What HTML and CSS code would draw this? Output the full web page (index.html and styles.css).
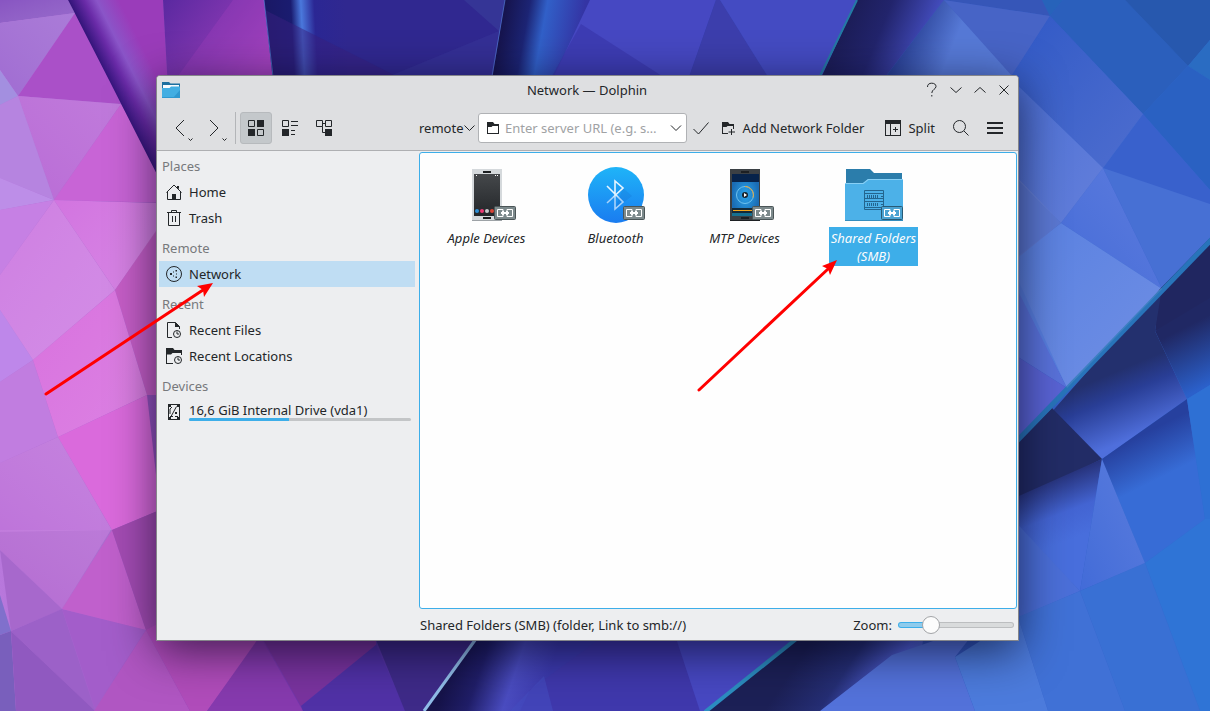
FILE: index.html
```html
<!DOCTYPE html>
<html lang="en">
<head>
<meta charset="utf-8">
<title>Network — Dolphin</title>
<link rel="stylesheet" href="styles.css">
</head>
<body>
<div class="desktop">
<svg class="wallpaper" viewBox="0 0 1210 711" preserveAspectRatio="xMidYMid slice" aria-hidden="true">
<defs>
<linearGradient id="base"><stop offset="0" stop-color="#b878dc"/><stop offset=".22" stop-color="#7c38ac"/><stop offset=".4" stop-color="#3430a0"/><stop offset="1" stop-color="#326cd0"/></linearGradient>
<linearGradient id="lite" x1="0" y1="0" x2="1" y2="1"><stop offset="0" stop-color="#fff" stop-opacity="0"/><stop offset="1" stop-color="#e8d8ff" stop-opacity=".16"/></linearGradient>
<linearGradient id="liteUp" x1="0" y1="1" x2="1" y2="0"><stop offset="0" stop-color="#fff" stop-opacity="0"/><stop offset="1" stop-color="#e8d8ff" stop-opacity=".14"/></linearGradient>
<linearGradient id="fold" gradientUnits="userSpaceOnUse" x1="88" y1="38" x2="128" y2="18"><stop offset="0" stop-color="#35157c"/><stop offset=".3" stop-color="#6a2ba8"/><stop offset=".55" stop-color="#8a55c8"/><stop offset="1" stop-color="#9a3cba"/></linearGradient>
<linearGradient id="mag" x1="0" y1="0" x2="1" y2=".6"><stop offset="0" stop-color="#5a28a0"/><stop offset="1" stop-color="#a042bc"/></linearGradient>
<linearGradient id="b1" gradientUnits="userSpaceOnUse" x1="267" y1="0" x2="345" y2="-4"><stop offset="0" stop-color="#1a1866"/><stop offset=".3" stop-color="#1a1c70"/><stop offset=".43" stop-color="#4a78dc"/><stop offset=".6" stop-color="#2b2794"/><stop offset="1" stop-color="#302890"/></linearGradient>
<linearGradient id="b2" gradientUnits="userSpaceOnUse" x1="503" y1="20" x2="580" y2="34"><stop offset="0" stop-color="#16144e"/><stop offset=".3" stop-color="#1c2474"/><stop offset=".52" stop-color="#3160c8"/><stop offset="1" stop-color="#3434a4"/></linearGradient>
<linearGradient id="b3" gradientUnits="userSpaceOnUse" x1="840" y1="40" x2="918" y2="72"><stop offset="0" stop-color="#1c1d58"/><stop offset=".4" stop-color="#22246c"/><stop offset="1" stop-color="#4650c4"/></linearGradient>
<linearGradient id="b4" gradientUnits="userSpaceOnUse" x1="900" y1="48" x2="945" y2="66"><stop offset="0" stop-color="#294094"/><stop offset="1" stop-color="#5679d6"/></linearGradient>
<linearGradient id="r1" gradientUnits="userSpaceOnUse" x1="1120" y1="370" x2="1146" y2="432"><stop offset="0" stop-color="#23306e"/><stop offset=".35" stop-color="#293e96"/><stop offset="1" stop-color="#4f6fdc"/></linearGradient>
<linearGradient id="r2" gradientUnits="userSpaceOnUse" x1="1180" y1="330" x2="1208" y2="385"><stop offset="0" stop-color="#202864"/><stop offset="1" stop-color="#2b60ca"/></linearGradient>
<linearGradient id="r3" gradientUnits="userSpaceOnUse" x1="1135" y1="438" x2="1156" y2="480"><stop offset="0" stop-color="#26409e"/><stop offset="1" stop-color="#376cd6"/></linearGradient>
<linearGradient id="r4" gradientUnits="userSpaceOnUse" x1="1045" y1="475" x2="1070" y2="540"><stop offset="0" stop-color="#222a6c"/><stop offset=".6" stop-color="#4364d2"/><stop offset="1" stop-color="#486edc"/></linearGradient>
<linearGradient id="w1" gradientUnits="userSpaceOnUse" x1="450" y1="670" x2="540" y2="700"><stop offset="0" stop-color="#16134a"/><stop offset=".3" stop-color="#201e68"/><stop offset=".66" stop-color="#4a4cc0"/><stop offset="1" stop-color="#3c3aae"/></linearGradient>
<linearGradient id="w2" gradientUnits="userSpaceOnUse" x1="805" y1="650" x2="888" y2="705"><stop offset="0" stop-color="#1c2056"/><stop offset=".45" stop-color="#252e74"/><stop offset=".85" stop-color="#5060d6"/><stop offset="1" stop-color="#4e68d0"/></linearGradient>
</defs>
<rect width="1210" height="711" fill="url(#base)"/>
<g>
<path fill="#8855c2" d="M0 0H68L75 13 0 23z"/><path fill="#a06cd2" d="M0 23 75 13 18 96 0 70z"/><path fill="#a38fe0" d="M0 70 18 96 0 105z"/>
<path fill="#aa50c8" d="M75 13 18 96 121 104 109 76z"/><path fill="#b96bd6" d="M18 96 121 104 54 200z"/><path fill="#b684e0" d="M18 96 0 105V178L54 200z"/>
<path fill="#bd8ee8" d="M0 178 54 200 0 210z"/><path fill="#c864d6" d="M121 104 170 190V203L54 200z"/><path fill="#c680e4" d="M54 200 0 210V275z"/>
<path fill="#ce7ee2" d="M54 200 0 275V310L33 360 115 290z"/><path fill="#d274e0" d="M54 200 157 203 160 226 115 290z"/><path fill="#c65ec8" d="M160 225 115 290 147 395H165z"/>
<path fill="#be87ea" d="M0 310 33 360 0 382z"/><path fill="#c17de0" d="M33 360 0 382V463L58 437z"/><path fill="#d870de" d="M33 360 115 290 147 395 58 437z"/>
<path fill="#b46bd2" d="M0 528H112L62 609 0 550z"/><path fill="#be74da" d="M58 437 0 463V532L112 530z"/><path fill="#da6adc" d="M58 437 147 395 160 510 112 530z"/>
<path fill="#a768cc" d="M0 550 62 609 11 631z"/><path fill="#8070cc" d="M0 595 11 631 0 635z"/><path fill="#795fbc" d="M0 635 11 631 16 711H0z"/>
<path fill="#9c61c8" d="M11 631 62 609 95 711z"/><path fill="#9059c0" d="M11 631 95 711H16z"/><path fill="#a35dca" d="M62 609 146 630 95 708z"/>
<path fill="#c060cc" d="M112 530 146 630 62 609z"/><path fill="#a44cb4" d="M112 530 160 510V625L146 630z"/><path fill="#b056c2" d="M146 630 190 711H94z"/>
<path fill="#b04cba" d="M146 630 165 620 270 625 207 711H190z"/><path fill="#863aae" d="M260 636 207 711H303z"/><path fill="#79339e" d="M255 625H376V645L301 706z"/>
<path fill="#5031a6" d="M376 645 301 706 303 711H405z"/><path fill="#3e2a88" d="M370 625H488L424 711H405z"/>
</g>
<g>
<path fill="url(#fold)" d="M68 0H163L168 90H170V200L109 80z"/><path fill="url(#mag)" d="M163 0H264L274 90H168z"/><path fill="#a040bc" opacity=".35" d="M233 0H264L273 76H178z"/>
<path fill="url(#b1)" d="M264 0H505L490 90H274z"/><path fill="#383a98" opacity=".7" d="M464 0H505L499 31z"/><path fill="#3a389c" opacity=".45" d="M499 31 492 76H400L380 80z"/><path fill="#382080" opacity=".5" d="M265 10 396 76H274z"/>
<path fill="url(#b2)" d="M505 0H590L552 80H492z"/><path fill="#4648c2" d="M590 0H716L688 80H552z"/><path fill="#3935aa" opacity=".65" d="M581 24 662 76H552z"/><path fill="#3c3eac" d="M716 0 688 80H770L720 0z"/><path fill="#444bc2" d="M720 0H857L820 80H770z"/>
<path fill="url(#b3)" d="M857 0H944L883 80H820z"/><path fill="url(#b4)" d="M944 0 883 80H1018z"/><path stroke="#237aa4" stroke-width="2" d="M857 0 820 76"/><path stroke="#5a8be0" opacity=".6" d="M505 0 492 76M264 0 273 76" fill="none"/>
<path fill="#3656b8" d="M944 0H1042L1050 16z"/><path fill="#4764c6" d="M944 0 1050 16 1012 76z"/><path fill="#2763ba" d="M1042 0H1063L1050 16z"/>
<path fill="#2b5fbc" d="M1063 0H1125L1188 66 1143 114 1050 16z"/><path fill="#2758ae" d="M1125 0H1210V40L1188 66z"/><path fill="#2a6cc2" d="M1188 66 1210 40V80z"/>
<path fill="#2a61c2" d="M1188 66 1210 80V190L1143 114z"/><path fill="#3058c6" d="M1050 16 1143 114 1103 168 1010 78z"/><path fill="#4a6dd4" d="M1010 78 1103 168 1061 223 1010 172z"/>
<path fill="#3961cc" d="M1143 114 1103 168 1162 289 1210 238V190z"/><path fill="#4770d4" d="M1103 168 1210 204V238L1162 289z"/><path fill="#456bd8" d="M1103 168 1061 223 1162 289z"/>
<path fill="#587fe0" d="M1061 223 1162 289 1067 388 1010 280V262z"/><path fill="#5b78d2" d="M1010 170 1061 223 1010 264z"/><path fill="#5972da" d="M1010 275 1067 388 1010 352z"/><path fill="#5963d4" d="M1010 352 1067 388 1010 450z"/>
<path fill="#202660" d="M1210 238V310L1155 331 1159 290z"/><path fill="url(#r1)" d="M1162 287 1155 331 1187 399 1102 459 1049 415z"/><path fill="url(#r2)" d="M1210 298 1155 331 1187 399 1210 385z"/>
<path fill="#222c66" d="M1052 408 1102 459 1010 505V450z"/><path fill="url(#r4)" d="M1102 459 1010 500V520L1080 591z"/><path fill="#426bd8" d="M1102 459 1080 591 1145 563z"/>
<path fill="url(#r3)" d="M1102 459 1187 399 1205 519 1145 563z"/><path fill="#2e70d4" d="M1187 399 1210 385V519H1205z"/><path fill="#2f74d6" d="M1205 519H1210V711H1200L1145 563z"/>
<path fill="#3970d4" d="M1080 591 1145 563 1200 711H1125z"/><path fill="#4b6fd8" d="M1010 516 1080 591 1010 621z"/><path fill="#4071d6" d="M1018 617 1080 591 1125 711H1048z"/>
<path stroke="#2874ba" stroke-width="5" d="M1213 238 1015 443"/>
<path fill="url(#w1)" d="M484 630H620L610 711H424z"/><path fill="#3f38ac" d="M605 635 530 690 520 711H700V635z"/><path fill="#454cc0" opacity=".6" d="M544 676 553 711H510z"/><path fill="#4748c2" d="M675 635H805L705 711H700z"/>
<path fill="url(#w2)" d="M805 630H925L910 711H705z"/><path fill="#5372da" d="M980 625 892 655 820 711H975L955 657z"/><path fill="#4c7bdc" d="M1018 617 955 657 975 711H1048z"/>
<path stroke="#90bce8" stroke-width="3" d="M478 636 424 711"/><path stroke="#2c8dc0" stroke-width="4" d="M800 636 705 712"/>
</g>
<g fill="url(#lite)"><path d="M54 200 157 203 160 226 115 290z"/><path d="M54 200 0 275V310L33 360 115 290z"/><path d="M33 360 115 290 147 395 58 437z"/><path d="M1050 16 1143 114 1103 168 1010 78z"/><path d="M1010 78 1103 168 1061 223 1010 172z"/><path d="M1061 223 1162 289 1067 388 1010 262z"/><path d="M0 0H68L75 13 0 23z"/></g>
<g fill="url(#liteUp)"><path d="M0 23 75 13 18 96 0 70z"/><path d="M18 96 121 104 54 200z"/><path d="M58 437 0 463V530H112z"/><path d="M0 530H112L62 609 0 550z"/><path d="M1103 168 1061 223 1162 289z"/><path d="M1102 459 1080 591 1145 563z"/></g>
</svg>

<main class="window">
<header class="titlebar">
<svg class="app-icon" viewBox="0 0 18 18" aria-hidden="true"><path fill="#1d6f9f" d="M0 1h7l1.500 1.500H18V8H0z"/><path fill="#f8fbfd" d="M1 4h16v4H1z"/><path fill="#43aee2" d="M0 7h7.500L9 5.500h9V17H0z"/><path fill="#288fc8" d="M0 16h18v1H0zM11 17l7-8v8z" opacity=".7"/></svg>
<h1 class="title">Network — Dolphin</h1>
<div class="window-buttons">
<button type="button" aria-label="Help"><svg class="line" viewBox="0 0 16 16"><path d="M3.500 5c0-2.600 1.600-3.800 4.200-3.800 2.700 0 4.300 1.300 4.300 3.300 0 2.700-4.200 3-4.200 6.500M7.800 13v1.500"/></svg></button>
<button type="button" aria-label="Minimize"><svg class="line" viewBox="0 0 16 16"><path d="m2.500 5.500 5.500 5 5.500-5"/></svg></button>
<button type="button" aria-label="Maximize"><svg class="line" viewBox="0 0 16 16"><path d="m2.500 10.500 5.500-5 5.500 5"/></svg></button>
<button type="button" aria-label="Close"><svg class="line" viewBox="0 0 16 16"><path d="m3.500 3.500 9 9m0-9-9 9"/></svg></button>
</div>
</header>

<div class="toolbar">
<div class="tools-left">
<button class="nav" type="button" aria-label="Back"><svg class="line" viewBox="0 0 24 24"><path d="m14 4-8 8 8 8M18.500 22.500l2 2 2-2"/></svg></button>
<button class="nav" type="button" aria-label="Forward"><svg class="line" viewBox="0 0 24 24"><path d="m6 4 8 8-8 8M18.500 22.500l2 2 2-2"/></svg></button>
<span class="separator"></span>
<button class="tool pressed" type="button" aria-label="Icons view"><svg viewBox="0 0 16 16"><path d="M9 0h7v7H9zM0 9h7v7H0z"/><path class="box" d="M.5.5h6v6h-6zM9.500 9.500h6v6h-6z"/></svg></button>
<button class="tool" type="button" aria-label="Compact view"><svg viewBox="0 0 16 16"><path d="M0 9h7v7H0zM9 1h7v1H9zM9 5h7v1H9zM9 10h4v1H9zM9 14h4v1H9z"/><path class="box" d="M.5.5h6v6h-6z"/></svg></button>
<button class="tool" type="button" aria-label="Tree view"><svg viewBox="0 0 16 16"><path d="M9 9h7v7H9z"/><path class="box" d="M.5.5h6v6h-6zM9.500.5h6v6h-6zM6.500 3.500h3M6.500 6.500v6h3"/></svg></button>
</div>
<div class="tools-right">
<span class="scheme"><select aria-label="Protocol"><option>remote</option></select><svg class="line" viewBox="0 0 12 16"><path d="m1.500 5.500 5 5 5-5"/></svg></span>
<div class="url-box">
<svg viewBox="0 0 12 12" class="folder" aria-hidden="true"><path fill-rule="evenodd" d="M0 0h6l1.500 2H12v10H0zM1 5v6h10V4H5.500l-1 1z"/></svg>
<input type="text" aria-label="Server URL" placeholder="Enter server URL (e.g. s…">
<button type="button" aria-label="Show history"><svg class="line" viewBox="0 0 16 16"><path d="m3 5.500 5 5 5-5"/></svg></button>
</div>
<button class="icon-button confirm" type="button" aria-label="Connect"><svg class="line" viewBox="0 0 16 16"><path d="m.5 9 5 5L15.500 2.500"/></svg></button>
<button class="text-button add" type="button"><svg viewBox="0 0 13 13" class="add-icon"><path d="M0 0h6l1.500 2H12v5h-1V4H5.500l-1 1H1v6h5v1H0zM9 7h1v2.500h3v1h-3V13H9v-2.500H6.500v-1H9z"/></svg>Add Network Folder</button>
<button class="text-button split" type="button"><svg viewBox="0 0 16 16"><path d="M0 0h16v16H0zM1 4v11h4V4zM6 4v11h9V4zM10 7h1v2h2v1h-2v2h-1v-2H8V9h2z" fill-rule="evenodd"/></svg>Split</button>
<button class="icon-button search" type="button" aria-label="Search"><svg class="line" viewBox="0 0 16 16"><circle cx="6.500" cy="6.500" r="6"/><path d="m11 11 4.500 4.500"/></svg></button>
<button class="icon-button" type="button" aria-label="Menu"><svg viewBox="0 0 16 16"><path d="M0 2h16v2H0zM0 7h16v2H0zM0 12h16v2H0z"/></svg></button>
</div>
</div>

<div class="content">
<nav class="places" aria-label="Places">
<h2>Places</h2>
<a class="place" href="#home"><svg viewBox="0 0 16 16"><path class="box" d="M.5 8.500 8 1l7.500 7.500M1.500 8v7.500h13V8"/><path d="M6 10h4v6H6zM11 2h2v3l-2-1z"/></svg>Home</a>
<a class="place" href="#trash"><svg viewBox="0 0 16 16"><path class="box" d="M1 2.500h14M5.500 2V.5h5V2M2.500 3v12.500h11V3M6.500 6v6M9.500 6v6"/></svg>Trash</a>
<h2>Remote</h2>
<a class="place current" href="#network"><svg viewBox="0 0 16 16"><circle class="box" cx="8" cy="8" r="7.500"/><path d="M4 7h2v2H4zM9.500 4h1.500v1.500H9.500zM9.500 10.500H11V12H9.500zM7 5.500h1v1H7zM7 9.500h1v1H7zM10 7.500h1v1h-1z"/></svg>Network</a>
<h2>Recent</h2>
<a class="place" href="#files"><svg viewBox="0 0 16 16"><path class="box" d="M6 15.500H1.500V.5h8l4 4V7"/><path d="M9 0l5 5H9z"/><circle class="box" cx="11" cy="12" r="3.500"/><path class="box" d="M11 9.500V12h2"/></svg>Recent Files</a>
<a class="place" href="#locations"><svg viewBox="0 0 16 16"><path d="M0 0h7l1.500 2H16v5h-1V5H6.500L5 6.500H1V15h6v1H0z"/><circle class="box" cx="12" cy="12" r="3.500"/><path class="box" d="M12 9.500V12h2"/></svg>Recent Locations</a>
<h2>Devices</h2>
<a class="place drive" href="#drive"><svg viewBox="0 0 16 16"><path fill-rule="evenodd" d="M2 0h12v16H2zM4 1 3 2v12l1 1h8l1-1V2l-1-1z"/><path class="box" d="M10.500 2.500 5 12.500M4 12.500h3M9 12.500h3M4 10V5l2-2"/><path d="M9 8h2v2H9zM3 1h2v2H3zM11 1h2v2h-2zM3 13h2v2H3zM11 13h2v2h-2z"/></svg><span class="drive-info">16,6 GiB Internal Drive (vda1)<span class="usage"><span class="usage-fill"></span></span></span></a>
</nav>

<div class="main">
<section class="files" aria-label="Network">
<a class="file" href="#apple"><svg class="file-icon" viewBox="0 0 64 64">
<defs><linearGradient id="scr" x2="0" y2="1"><stop stop-color="#45484b"/><stop offset="1" stop-color="#232629"/></linearGradient></defs>
<path fill="#d5d9dc" d="M17 6h30v52H17z"/><path fill="#9da2a6" d="M17 57h30v1H17z"/><path fill="url(#scr)" d="M19 11h26v42H19z"/><path fill="#1b1e20" d="M28 8h8v2h-8zM28 54h8v2h-8z"/><path fill="#fff" d="M21 12h1v1h-1zM40 12h1v1h-1zM42 12h1v1h-1z"/><circle cx="22" cy="48" r="2" fill="#2d8fd6"/><circle cx="27" cy="48" r="2" fill="#ee3a74"/><circle cx="32" cy="48" r="2" fill="#c8cccf"/><circle cx="37" cy="48" r="2" fill="#da4436"/>
<g id="link"><rect x="39.500" y="43.500" width="21" height="13" rx="1" fill="#7d8a8c" stroke="#4b5557"/><path fill="none" stroke="#fff" d="M48 46.500h-5.500v7H48v-2M48 46.500v2M52 46.500h5.500v7H52v-2M52 46.500v2"/><path fill="#fff" d="M46 49h1v-1h2v1h2v-1h2v1h1v2h-1v1h-2v-1h-2v1h-2v-1h-1z"/></g></svg><span class="file-name">Apple Devices</span></a>
<a class="file" href="#bluetooth"><svg class="file-icon" viewBox="0 0 64 64"><defs><linearGradient id="bt" x2="0" y2="1"><stop stop-color="#1fb4f8"/><stop offset="1" stop-color="#1a7cf0"/></linearGradient><linearGradient id="rune" gradientUnits="userSpaceOnUse" x1="0" y1="18" x2="0" y2="46"><stop offset=".5" stop-color="#e6f5ff"/><stop offset=".6" stop-color="#a8d2fb"/></linearGradient></defs><circle cx="32" cy="32" r="28" fill="url(#bt)"/><path fill="#0c4ea8" opacity=".13" d="m39 25 9 8-17 13z"/><path fill="none" stroke="url(#rune)" stroke-width="1.600" d="m23 23 16 16-8 7V18l8 7-16 15"/><use href="#link"/></svg><span class="file-name">Bluetooth</span></a>
<a class="file" href="#mtp"><svg class="file-icon" viewBox="0 0 64 64"><defs><radialGradient id="mtp"><stop stop-color="#2ba4ea"/><stop offset="1" stop-color="#1a6cb4"/></radialGradient></defs><path fill="#3b4044" d="M17 6h30v52H17z"/><path fill="#1d2023" d="M28 8h8v2h-8zM28 54h8v2h-8zM17 57h30v1H17z"/><path fill="url(#mtp)" d="M19 11h27v42H19z"/><path fill="#07234a" d="M19 11h27v8H19z"/><path fill="#142a38" d="M19 45h27v5H19z"/><path fill="#167090" d="M19 50h27v3H19z"/><path fill="#f6a81c" d="M20 47h19v1H20z"/><circle cx="32" cy="32" r="8.500" fill="none" stroke="#6fc3ef"/><path d="M32 23.500a8.500 8.500 0 0 1 8 11" fill="none" stroke="#f0a632"/><circle cx="32" cy="32" r="3" fill="#17222b"/><path fill="#fff" d="m31 30 3 2-3 2z"/><use href="#link"/></svg><span class="file-name">MTP Devices</span></a>
<a class="file selected" href="#smb"><svg class="file-icon" viewBox="0 0 64 64"><path fill="#2b7dab" d="M4 6h24l4 4h28v12H4z"/><path fill="#4cb1e8" d="M3 20h18l5-4h35v42H3z"/><path fill="#87d0f6" d="M3 20h18l5-4h35v1H26.500l-5 4H3z"/><path fill="#348dbe" d="M3 57h58v1H3z"/><g fill="none" stroke="#23658e"><path d="M22.500 27.500h19v19h-19zM23 30.500h18M23 35.500h18M23 38.500h18M23 44.500h18"/><path d="M25.500 32v3m2-3v3m2-3v3m2-3v3m2-3v3m2-3v3m-10 5v3m2-3v3m2-3v3m2-3v3m2-3v3m2-3v3M39 33.500h2M39 41.500h2"/></g><rect x="39.500" y="43.500" width="21" height="13" rx="1" fill="#4ba3d2" stroke="#285a75"/><path fill="none" stroke="#fff" d="M48 46.500h-5.500v7H48v-2M48 46.500v2M52 46.500h5.500v7H52v-2M52 46.500v2"/><path fill="#fff" d="M46 49h1v-1h2v1h2v-1h2v1h1v2h-1v1h-2v-1h-2v1h-2v-1h-1z"/></svg><span class="file-name">Shared Folders (SMB)</span></a>
</section>
<footer class="status"><span>Shared Folders (SMB) (folder, Link to smb://)</span><label class="zoom">Zoom:<input type="range" min="0" max="100" value="24"></label></footer>
</div>
</div>
</main>

<svg class="arrows" viewBox="0 0 1210 711" preserveAspectRatio="xMidYMid slice" aria-hidden="true"><g stroke="#f00" stroke-width="3" stroke-linecap="round"><path d="M46 394 203 290M699 390 828 269"/></g><g fill="#f00"><path d="m213 283-9 14-1-7-6-4z"/><path d="m837 260-7 15-2-6-6-3z"/></g></svg>
</div>
</body>
</html>
```
FILE: styles.css
```css
* {
  box-sizing: border-box;
}

body {
  margin: 0;
  color: #232629;
  font: 13px/18px "Noto Sans", sans-serif;
}

button,
input,
select {
  margin: 0;
  padding: 0;
  border: 0;
  background: none;
  color: inherit;
  font: inherit;
}

button {
  display: flex;
  align-items: center;
  justify-content: center;
}

a {
  color: inherit;
  text-decoration: none;
}

svg {
  flex: none;
  width: 16px;
  height: 16px;
  fill: #232629;
}

.line,
.box {
  fill: none;
  stroke: #232629;
}

.desktop {
  position: relative;
  display: flex;
  min-height: 100vh;
  padding: 75px 191px 70px 156px;
  overflow: hidden;
}

.wallpaper,
.arrows {
  position: absolute;
  inset: 0;
  width: 100%;
  height: 100%;
}

.arrows {
  pointer-events: none;
}

.window {
  position: relative;
  display: flex;
  flex: 1;
  flex-direction: column;
  min-width: 0;
  border: 1px solid #85868a;
  border-radius: 4px 4px 0 0;
  background: #edeef0;
  box-shadow: 0 10px 46px rgba(0, 0, 20, 0.65);
}

.titlebar {
  display: grid;
  grid-template-columns: 1fr auto 1fr;
  align-items: center;
  height: 27px;
  padding: 1px 6px 0 5px;
  border-radius: 3px 3px 0 0;
  background: #dedfe1;
}

.app-icon {
  width: 18px;
  height: 18px;
}

.title {
  margin: 0;
  font-size: 13px;
  font-weight: 400;
}

.window-buttons {
  display: flex;
  gap: 8px;
  justify-content: flex-end;
}

.toolbar {
  display: flex;
  padding: 9px 0 6px;
  border-bottom: 1px solid #aeafb2;
  background: #dedfe1;
}

.tools-left {
  display: flex;
  flex: none;
  width: 262px;
  height: 32px;
  padding-left: 8px;
}

.nav {
  width: 34px;
}

.nav svg {
  width: 24px;
  height: 24px;
  overflow: visible;
}

.separator {
  width: 1px;
  margin: 0 4px 0 2px;
  background: #b3b5b8;
}

.tool {
  width: 32px;
  margin-right: 2px;
  border-radius: 3px;
}

.pressed {
  border: 1px solid #b7babd;
  background: #c4c8cb;
}

.tools-right {
  display: flex;
  flex: 1;
  align-items: center;
  min-width: 0;
  padding-right: 15px;
}

.scheme {
  display: grid;
  align-items: center;
  width: 59px;
}

.scheme > * {
  grid-area: 1 / 1;
}

.scheme select {
  width: 58px;
  appearance: none;
}

.scheme svg {
  justify-self: end;
  width: 12px;
  margin-right: 3px;
  pointer-events: none;
}

.url-box {
  display: flex;
  flex: 1;
  align-items: center;
  min-width: 0;
  height: 30px;
  padding: 0 2px 0 8px;
  border: 1px solid #b0b2b5;
  border-radius: 3px;
  background: #fff;
}

.folder {
  width: 12px;
  height: 12px;
}

.url-box input {
  flex: 1;
  min-width: 0;
  margin-left: 6px;
}

.url-box input::placeholder {
  color: #a0a2a4;
}

.confirm {
  margin-left: 6px;
}

.text-button {
  gap: 7px;
  white-space: nowrap;
}

.add {
  margin-left: 13px;
}

.add-icon {
  width: 13px;
  height: 13px;
}

.split {
  margin-left: 21px;
}

.search {
  margin: 0 18px;
}

.content {
  display: flex;
  flex: 1;
}

.places {
  flex: none;
  width: 262px;
  padding: 0 4px 0 2px;
}

.places h2 {
  height: 30px;
  margin: 0;
  padding: 8px 3px 0;
  color: #77797c;
  font-size: 13px;
  font-weight: 400;
}

.places h2:first-child {
  height: 28px;
  padding-top: 6px;
}

.place {
  display: flex;
  gap: 7px;
  align-items: center;
  height: 26px;
  padding: 0 4px 0 7px;
}

.current {
  background: #bfddf3;
}

.drive-info {
  display: grid;
  flex: 1;
  padding-bottom: 1px;
  line-height: 16px;
}

.usage {
  height: 3px;
  border-radius: 2px;
  background: #c3c5c7;
}

.usage-fill {
  display: block;
  width: 45%;
  height: 3px;
  border-radius: 2px 0 0 2px;
  background: #3daee9;
}

.main {
  display: flex;
  flex: 1;
  flex-direction: column;
  min-width: 0;
  padding: 1px 1px 0 0;
}

.files {
  display: flex;
  flex: 1;
  flex-wrap: wrap;
  align-content: flex-start;
  padding: 10px 2px;
  border: 1px solid #3daee9;
  border-radius: 3px;
  background: #fefefe;
}

.file {
  display: flex;
  flex-direction: column;
  align-items: center;
  width: 129px;
}

.file-icon {
  width: 64px;
  height: 64px;
}

.file-name {
  max-width: 89px;
  padding: 2px 0 1px;
  font-style: italic;
  text-align: center;
}

.selected .file-name {
  width: 89px;
  background: #3daee9;
  color: #fcfcfc;
}

.status {
  display: flex;
  align-items: center;
  justify-content: space-between;
  height: 31px;
  padding: 1px 3px 0 1px;
}

.zoom {
  display: flex;
  gap: 6px;
  align-items: center;
}

.zoom input {
  width: 116px;
  height: 18px;
  appearance: none;
}

.zoom input::-webkit-slider-runnable-track {
  height: 6px;
  border: 1px solid transparent;
  border-radius: 3px;
  background:
    linear-gradient(90deg, #8fcbec 28%, #d9dbdc 28%) padding-box,
    linear-gradient(90deg, #3daee9 28%, #bcbec0 28%) border-box;
}

.zoom input::-webkit-slider-thumb {
  width: 18px;
  height: 18px;
  margin-top: -7px;
  border: 1px solid #a2a4a7;
  border-radius: 50%;
  background: #fcfcfc;
  appearance: none;
}
```
